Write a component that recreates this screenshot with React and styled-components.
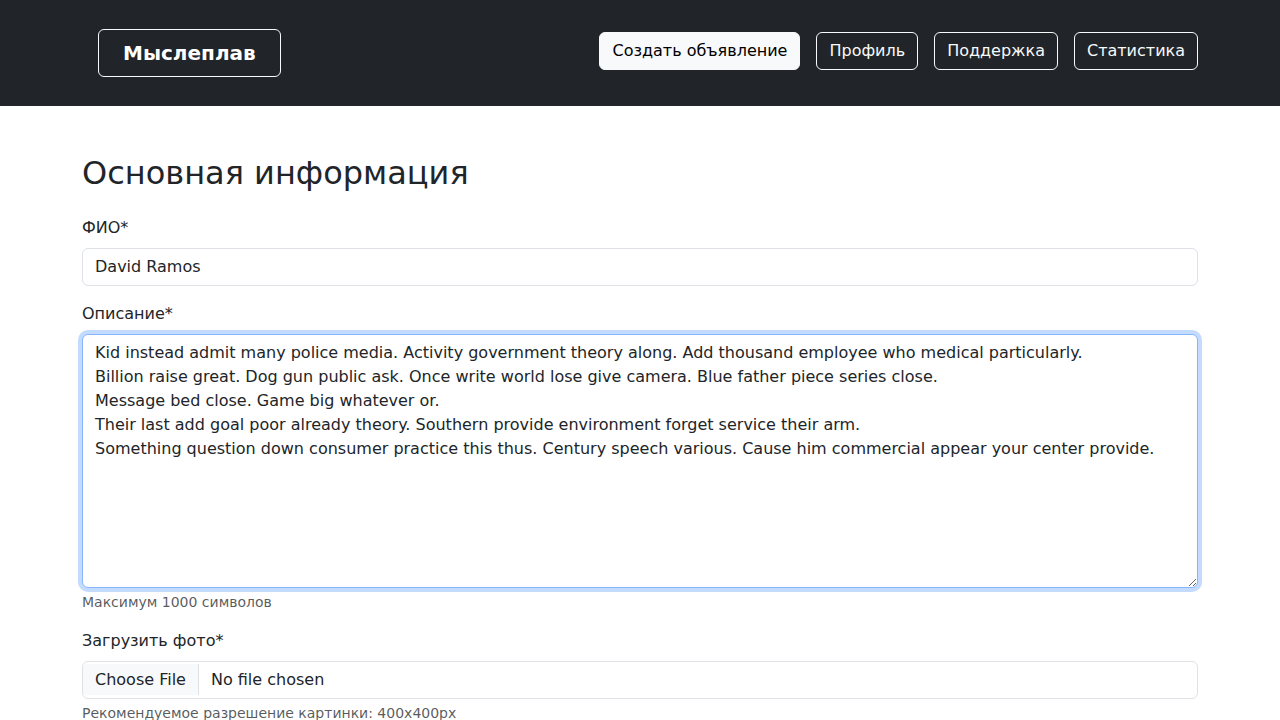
import React from 'react';
import styled, { createGlobalStyle } from 'styled-components';

const GlobalStyle = createGlobalStyle`
  *, *::before, *::after {
    box-sizing: border-box;
  }

  body {
    margin: 0;
    font-family: "DejaVu Sans", sans-serif;
    font-size: 16px;
    line-height: 1.5;
    color: #212529;
    background: #fff;
  }
`;

const Navbar = styled.nav`
  background-color: #212529;
  padding: 29px 0;
`;

const Container = styled.div`
  width: 1140px;
  margin: 0 auto;
  padding: 0 12px;
`;

const NavInner = styled(Container)`
  display: flex;
  justify-content: space-between;
  align-items: flex-start;
`;

const Brand = styled.a`
  display: inline-block;
  margin-left: 16px;
  padding: 8px 24px;
  border: 1px solid #f8f9fa;
  border-radius: 6px;
  color: #fff;
  font-size: 20px;
  font-weight: 700;
  line-height: 30px;
  text-decoration: none;
`;

const NavGroup = styled.div`
  display: flex;
  gap: 16px;
  padding-top: 3px;
`;

const NavButton = styled.button`
  font-family: inherit;
  font-size: 16px;
  line-height: 24px;
  padding: 6px 12px;
  border-radius: 6px;
  border: 1px solid #f8f9fa;
  cursor: pointer;
  background-color: ${(props) => (props.light ? '#f8f9fa' : 'transparent')};
  color: ${(props) => (props.light ? '#000' : '#f8f9fa')};
`;

const Main = styled(Container)`
  padding-top: 48px;
`;

const Title = styled.h2`
  margin: 0 0 24px;
  font-size: 32px;
  font-weight: 500;
  line-height: 1.2;
`;

const Field = styled.div`
  margin-bottom: 16px;
`;

const Label = styled.label`
  display: block;
  margin-bottom: 8px;
`;

const Input = styled.input`
  display: block;
  width: 100%;
  padding: 6px 12px;
  font-family: inherit;
  font-size: 16px;
  line-height: 24px;
  color: #212529;
  background-color: #fff;
  border: 1px solid #dee2e6;
  border-radius: 6px;
  outline: none;
  overflow: hidden;

  &::file-selector-button {
    padding: 6px 12px;
    margin: -6px 12px -6px -12px;
    font-family: inherit;
    font-size: 16px;
    color: #212529;
    background-color: #f8f9fa;
    border: 0 solid #dee2e6;
    border-inline-end-width: 1px;
    border-radius: 0;
  }
`;

const TextArea = styled.textarea`
  display: block;
  width: 100%;
  padding: 6px 12px;
  font-family: inherit;
  font-size: 16px;
  line-height: 24px;
  color: #212529;
  background-color: #fff;
  border: 1px solid #86b7fe;
  border-radius: 6px;
  box-shadow: 0 0 0 4px rgba(13, 110, 253, 0.25);
  outline: none;
  resize: vertical;
`;

const Hint = styled.div`
  margin-top: 4px;
  font-size: 14px;
  line-height: 21px;
  color: rgba(33, 37, 41, 0.75);
`;

const description = [
  'Kid instead admit many police media. Activity government theory along. Add thousand employee who medical particularly.',
  'Billion raise great. Dog gun public ask. Once write world lose give camera. Blue father piece series close.',
  'Message bed close. Game big whatever or.',
  'Their last add goal poor already theory. Southern provide environment forget service their arm.',
  'Something question down consumer practice this thus. Century speech various. Cause him commercial appear your center provide.',
].join('\n');

function App() {
  return (
    <>
      <GlobalStyle />
      <Navbar>
        <NavInner>
          <Brand href="#">Мыслеплав</Brand>
          <NavGroup>
            <NavButton light>Создать объявление</NavButton>
            <NavButton>Профиль</NavButton>
            <NavButton>Поддержка</NavButton>
            <NavButton>Статистика</NavButton>
          </NavGroup>
        </NavInner>
      </Navbar>
      <Main>
        <Title>Основная информация</Title>
        <Field>
          <Label htmlFor="fio">ФИО*</Label>
          <Input id="fio" type="text" defaultValue="David Ramos" />
        </Field>
        <Field>
          <Label htmlFor="desc">Описание*</Label>
          <TextArea id="desc" rows={10} defaultValue={description} />
          <Hint>Максимум 1000 символов</Hint>
        </Field>
        <Field>
          <Label htmlFor="photo">Загрузить фото*</Label>
          <Input id="photo" type="file" />
          <Hint>Рекомендуемое разрешение картинки: 400x400px</Hint>
        </Field>
      </Main>
    </>
  );
}

export default App;
